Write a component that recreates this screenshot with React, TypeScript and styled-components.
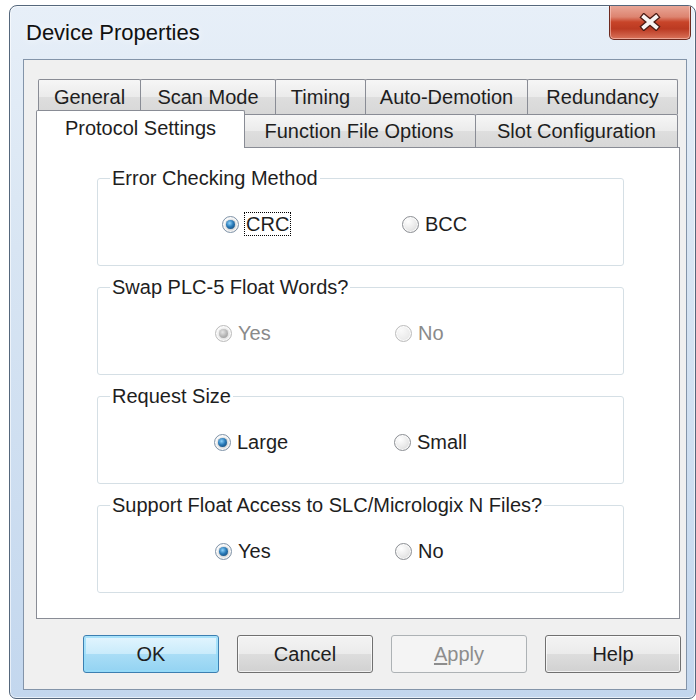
import React from "react";
import styled, { createGlobalStyle, css } from "styled-components";

const GlobalStyle = createGlobalStyle`
  html, body {
    margin: 0;
    padding: 0;
    background: #ffffff;
    overflow: hidden;
  }
  body {
    font-family: "Liberation Sans", Arial, sans-serif;
    color: #1e1e1e;
  }
  * { box-sizing: border-box; }
`;

/* ---------- window frame ---------- */

const Window = styled.div`
  margin: 5px 0 0 9px;
  width: 687px;
  height: 694px;
  border: 1px solid #55677c;
  border-radius: 8px 8px 7px 7px;
  background: linear-gradient(180deg, #e7eff8 0%, #d8e5f3 35%, #c3d7ee 100%);
  box-shadow: inset 0 0 0 1px rgba(255, 255, 255, 0.6);
  display: flex;
  flex-direction: column;
  overflow: hidden;
`;

const TitleBar = styled.div`
  height: 53px;
  display: flex;
  align-items: flex-start;
  justify-content: space-between;
  flex-shrink: 0;
`;

const Title = styled.div`
  margin: 14px 0 0 16px;
  font-size: 22px;
  line-height: 26px;
  color: #111;
  text-shadow: 0 0 8px rgba(255, 255, 255, 0.9);
`;

const CloseButton = styled.div`
  margin: -1px 4px 0 0;
  width: 82px;
  height: 35px;
  border: 1px solid #6e2a1f;
  border-top: none;
  border-radius: 0 0 5px 5px;
  background: linear-gradient(
    180deg,
    #eaa99a 0%,
    #dd8470 35%,
    #c84429 50%,
    #bb3a22 70%,
    #da735a 100%
  );
  box-shadow: inset 0 0 0 1px rgba(255, 210, 200, 0.55);
  display: flex;
  align-items: center;
  justify-content: center;
`;

const Client = styled.div`
  flex: 1;
  margin: 0 8px 8px 13px;
  border: 1px solid #8394a9;
  background: #f0f0f0;
  display: flex;
  flex-direction: column;
  padding: 19px 5px 16px 12px;
`;

/* ---------- tab control ---------- */

const TabRows = styled.div`
  display: flex;
  flex-direction: column;
  padding-left: 2px;
  position: relative;
  z-index: 1;
`;

const TabRow = styled.div<{ $h: number }>`
  display: flex;
  height: ${(p) => p.$h}px;
`;

const Tab = styled.div<{ $w: number; $active?: boolean }>`
  width: ${(p) => p.$w}px;
  flex-shrink: 0;
  border: 1px solid #898c95;
  border-bottom: none;
  border-radius: 2px 2px 0 0;
  background: linear-gradient(180deg, #f6f6f6 0%, #ebebeb 50%, #dedede 51%, #d7d7d7 100%);
  font-size: 20px;
  display: flex;
  align-items: center;
  justify-content: center;
  white-space: nowrap;
  & + & {
    margin-left: -1px;
  }
  ${(p) =>
    p.$active &&
    css`
      position: relative;
      z-index: 2;
      background: #ffffff;
      margin: -4px -2px -1px -2px;
      width: ${p.$w + 4}px;
      padding-bottom: 2px;
      & + ${Tab} {
        margin-left: -1px;
      }
    `}
`;

const Panel = styled.div`
  flex: 1;
  margin-right: 1px;
  background: #ffffff;
  border: 1px solid #898c95;
  display: flex;
  flex-direction: column;
  gap: 9px;
  padding: 18px 0 0 60px;
`;

/* ---------- group boxes ---------- */

const Group = styled.fieldset`
  width: 527px;
  margin: 0;
  padding: 22px 0 29px;
  border: 1px solid #d5dfe5;
  border-radius: 3px;
  min-inline-size: 0;
`;

const Legend = styled.legend`
  margin-left: 12px;
  padding: 0 2px;
  font-size: 20px;
  line-height: 24px;
  color: #1e1e1e;
`;

const OptionRow = styled.div<{ $indent: number }>`
  display: flex;
  height: 24px;
  padding-left: ${(p) => p.$indent}px;
`;

const Option = styled.label<{ $disabled?: boolean }>`
  width: 180px;
  display: flex;
  align-items: center;
  font-size: 20px;
  color: ${(p) => (p.$disabled ? "#8a8a8a" : "#1e1e1e")};
`;

const RadioDot = styled.span<{ $checked?: boolean; $disabled?: boolean }>`
  width: 17px;
  height: 17px;
  border-radius: 50%;
  flex-shrink: 0;
  position: relative;
  border: 1px solid ${(p) => (p.$disabled ? "#bcbcbc" : "#8c8f94")};
  background: ${(p) =>
    p.$disabled
      ? "radial-gradient(circle at 35% 30%, #fafafa 0%, #ececec 60%, #dedede 100%)"
      : "radial-gradient(circle at 35% 30%, #ffffff 0%, #e9e9e9 55%, #cfcfcf 100%)"};
  box-shadow: inset 0 0 0 1px rgba(255, 255, 255, 0.8);
  ${(p) =>
    p.$checked &&
    css`
      border-color: ${p.$disabled ? "#bcbcbc" : "#7f93a8"};
      &::after {
        content: "";
        position: absolute;
        left: 3px;
        top: 3px;
        width: 9px;
        height: 9px;
        border-radius: 50%;
        background: ${p.$disabled
          ? "radial-gradient(circle at 40% 35%, #e6e6e6 0%, #b4b4b4 55%, #8f8f8f 100%)"
          : "radial-gradient(circle at 40% 35%, #8fd3fb 0%, #2a7bb9 45%, #0b3a66 100%)"};
        box-shadow: 0 0 1px ${p.$disabled ? "#9a9a9a" : "#0b3455"};
      }
    `}
`;

const OptionText = styled.span<{ $focused?: boolean }>`
  margin-left: 6px;
  line-height: 22px;
  ${(p) =>
    p.$focused &&
    css`
      border: 1px dotted #000;
      padding: 0 1px;
      margin-left: 5px;
    `}
`;

/* ---------- dialog buttons ---------- */

const ButtonRow = styled.div`
  display: flex;
  justify-content: flex-end;
  gap: 18px;
  margin-top: 16px;
`;

type Variant = "default" | "normal" | "disabled";

const DialogButton = styled.div<{ $variant: Variant }>`
  width: 136px;
  height: 38px;
  border-radius: 3px;
  font-size: 20px;
  display: flex;
  align-items: center;
  justify-content: center;
  ${(p) =>
    p.$variant === "default"
      ? css`
          border: 1px solid #3c7fb1;
          background: linear-gradient(180deg, #e3f5fe 0%, #c9ebfb 50%, #a9ddf6 51%, #93d3f2 100%);
          box-shadow: inset 0 0 0 2px rgba(150, 220, 250, 0.75);
          color: #1e1e1e;
        `
      : p.$variant === "disabled"
      ? css`
          border: 1px solid #adb2b5;
          background: #f4f4f4;
          color: #8d8d8d;
        `
      : css`
          border: 1px solid #707070;
          background: linear-gradient(180deg, #f3f3f3 0%, #ebebeb 50%, #dddddd 51%, #d1d1d1 100%);
          box-shadow: inset 0 0 0 1px rgba(255, 255, 255, 0.7);
          color: #1e1e1e;
        `}
`;

const AccessKey = styled.span`
  text-decoration: underline;
  text-underline-offset: 2px;
`;

/* ---------- data ---------- */

const backTabs = [
  { label: "General", w: 103 },
  { label: "Scan Mode", w: 136 },
  { label: "Timing", w: 91 },
  { label: "Auto-Demotion", w: 163 },
  { label: "Redundancy", w: 151 },
];

const frontTabs = [
  { label: "Protocol Settings", w: 205, active: true },
  { label: "Function File Options", w: 234 },
  { label: "Slot Configuration", w: 203 },
];

type Opt = { label: string; checked?: boolean; focused?: boolean };
type GroupDef = { title: string; disabled?: boolean; indent: number; options: Opt[] };

const groups: GroupDef[] = [
  {
    title: "Error Checking Method",
    indent: 124,
    options: [{ label: "CRC", checked: true, focused: true }, { label: "BCC" }],
  },
  {
    title: "Swap PLC-5 Float Words?",
    disabled: true,
    indent: 117,
    options: [{ label: "Yes", checked: true }, { label: "No" }],
  },
  {
    title: "Request Size",
    indent: 116,
    options: [{ label: "Large", checked: true }, { label: "Small" }],
  },
  {
    title: "Support Float Access to SLC/Micrologix N Files?",
    indent: 117,
    options: [{ label: "Yes", checked: true }, { label: "No" }],
  },
];

const CloseGlyph = () => (
  <svg width="24" height="18" viewBox="0 0 24 18">
    <g strokeLinecap="square">
      <path d="M6 4 L18 14 M18 4 L6 14" stroke="#4b1a12" strokeWidth="6.5" />
      <path d="M6 4 L18 14 M18 4 L6 14" stroke="#f7f3f2" strokeWidth="4" />
    </g>
  </svg>
);

export default function App() {
  return (
    <>
      <GlobalStyle />
      <Window>
        <TitleBar>
          <Title>Device Properties</Title>
          <CloseButton>
            <CloseGlyph />
          </CloseButton>
        </TitleBar>
        <Client>
          <TabRows>
            <TabRow $h={35}>
              {backTabs.map((t) => (
                <Tab key={t.label} $w={t.w}>
                  {t.label}
                </Tab>
              ))}
            </TabRow>
            <TabRow $h={33}>
              {frontTabs.map((t) => (
                <Tab key={t.label} $w={t.w} $active={t.active}>
                  {t.label}
                </Tab>
              ))}
            </TabRow>
          </TabRows>
          <Panel>
            {groups.map((g) => (
              <Group key={g.title}>
                <Legend>{g.title}</Legend>
                <OptionRow $indent={g.indent}>
                  {g.options.map((o) => (
                    <Option key={o.label} $disabled={g.disabled}>
                      <RadioDot $checked={o.checked} $disabled={g.disabled} />
                      <OptionText $focused={o.focused}>{o.label}</OptionText>
                    </Option>
                  ))}
                </OptionRow>
              </Group>
            ))}
          </Panel>
          <ButtonRow>
            <DialogButton $variant="default">OK</DialogButton>
            <DialogButton $variant="normal">Cancel</DialogButton>
            <DialogButton $variant="disabled">
              <span>
                <AccessKey>A</AccessKey>pply
              </span>
            </DialogButton>
            <DialogButton $variant="normal">Help</DialogButton>
          </ButtonRow>
        </Client>
      </Window>
    </>
  );
}
